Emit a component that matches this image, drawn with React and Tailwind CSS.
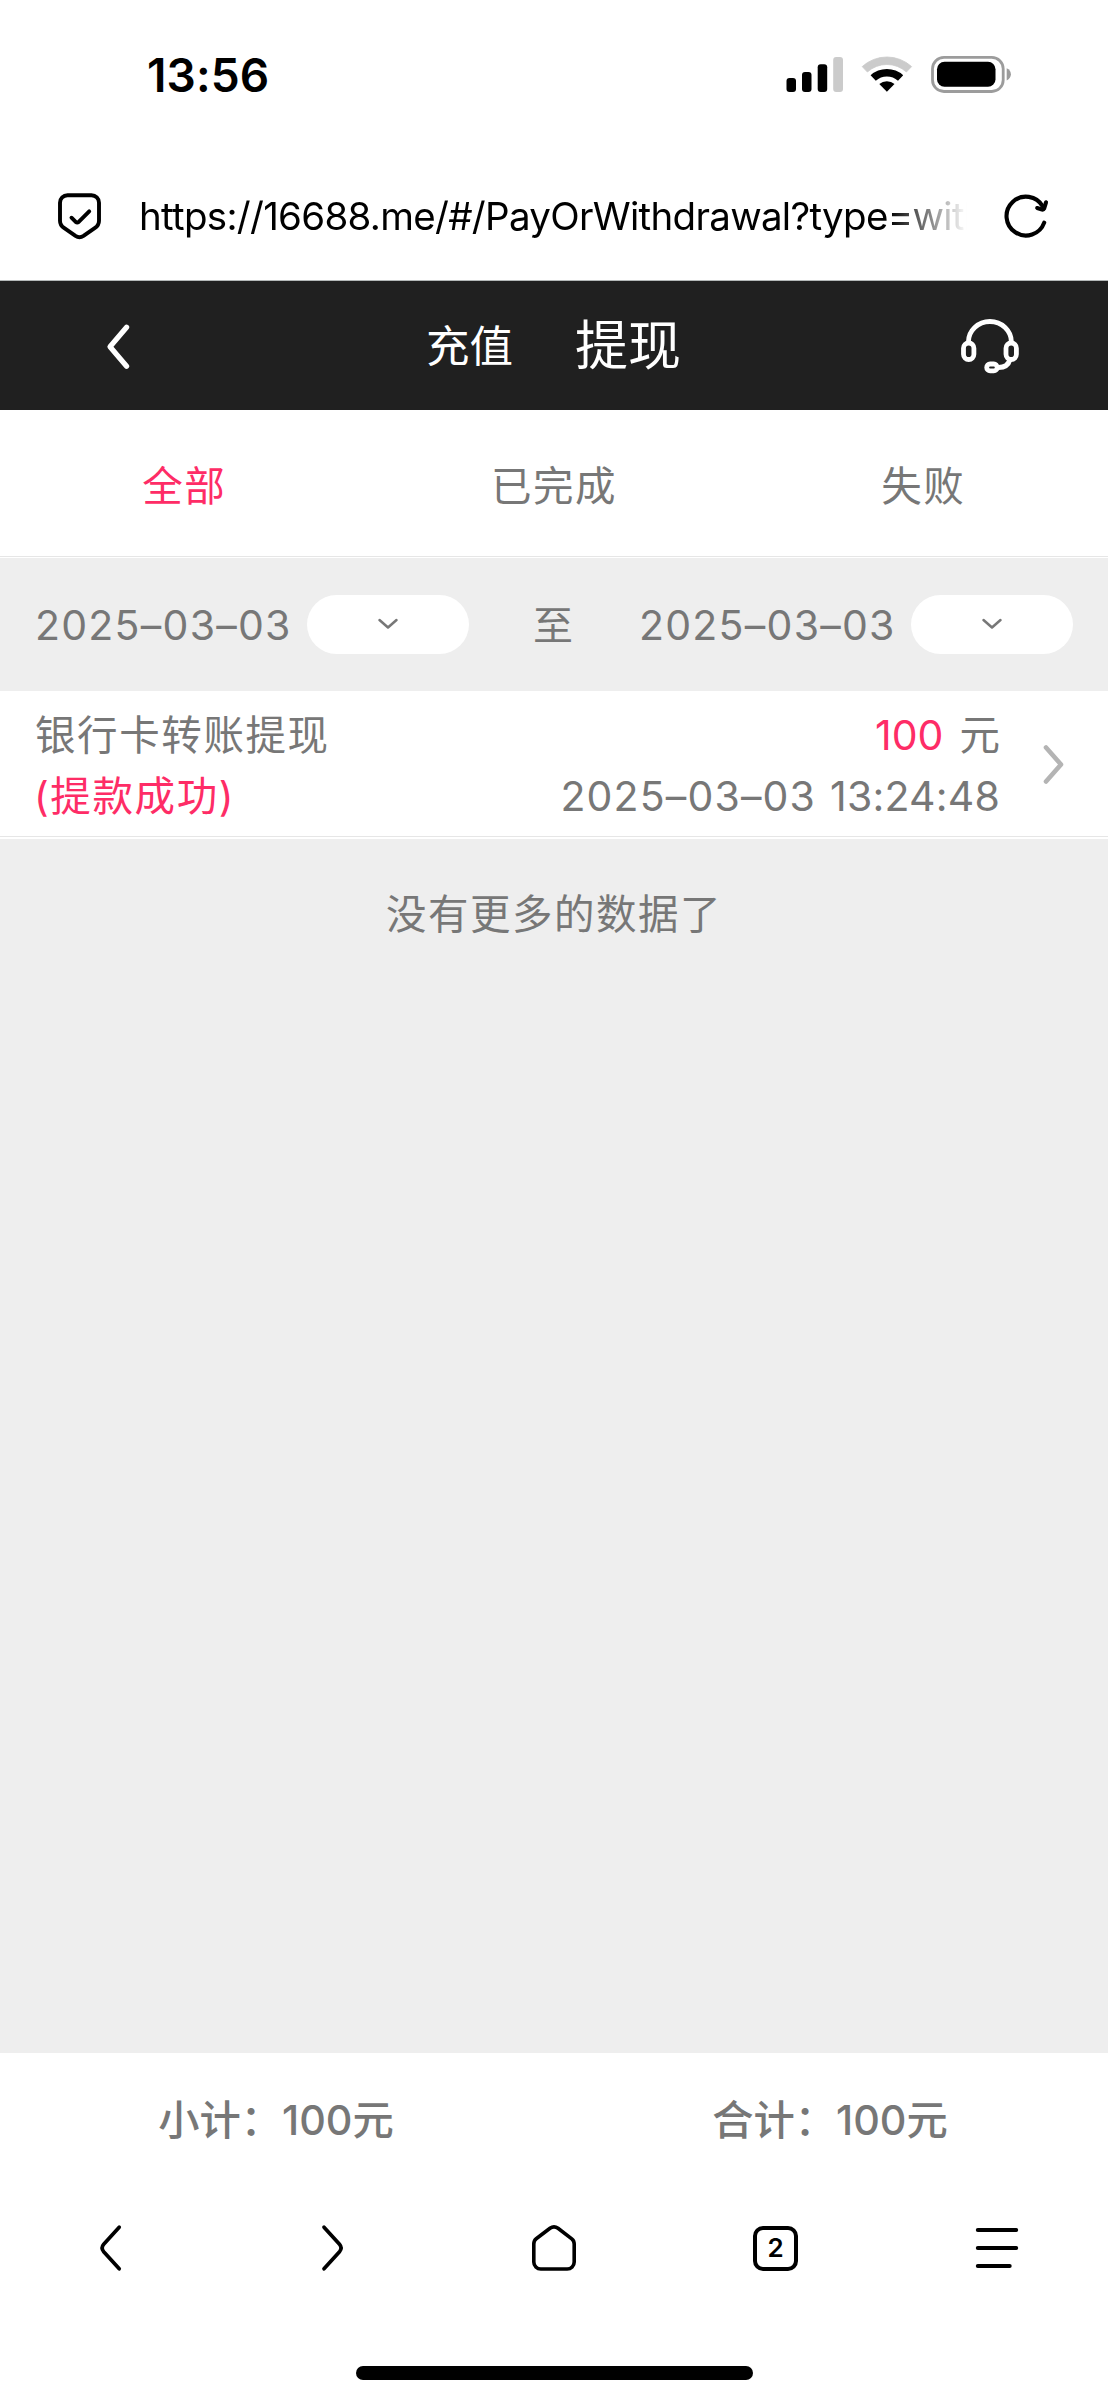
function StatusBar() {
  return (
    <div className="flex h-[152px] items-start justify-between pl-[147px] pr-[97px]">
      <div className="mt-[47px] text-[46px] font-semibold leading-[56px] tracking-[0.1px] text-black">13:56</div>
      <svg className="mt-[54px]" width="226" height="42" viewBox="785 54 226 42">
        <rect x="786.5" y="78" width="9.5" height="14" rx="3" />
        <rect x="802" y="72" width="9.5" height="20" rx="3" />
        <rect x="817.7" y="64.3" width="9.5" height="27.7" rx="3" />
        <rect x="833.2" y="57" width="9.8" height="35" rx="3" fill="#cbcbcb" />
        <path d="M862.2 66.6a36.5 36.5 0 0 1 49.4 0l-5.200 5.400a29 29 0 0 0-39 0z" fill="#cbcbcb" stroke="#cbcbcb" strokeWidth="0.8" strokeLinejoin="round" />
        <path d="M870.6 75.3a24 24 0 0 1 32.6 0l-5.200 5.500a16.6 16.6 0 0 0-22.2 0z" />
        <path d="M879.3 84a11.5 11.5 0 0 1 15.2 0L886.9 91.8z" />
        <rect x="932.5" y="57.3" width="70.7" height="34.2" rx="11.5" fill="none" stroke="#9c9c9c" strokeWidth="2.8" />
        <rect x="937" y="61.7" width="58.5" height="25" rx="7.5" />
        <path d="M1006.7 68.2c5.6 2.2 5.6 10.2 0 12.2z" fill="#9c9c9c" />
      </svg>
    </div>
  );
}

function AddressBar() {
  return (
    <div className="flex h-[128px] items-center pl-[56px] pr-[58px]">
      <svg className="shrink-0" width="48" height="52" viewBox="56 191 48 52" fill="none" stroke="#000" strokeWidth="3.9" strokeLinecap="round" strokeLinejoin="round">
        <path d="M67.500 196.200h24a7.500 7.500 0 0 1 7.500 7.500v18c0 3.500-1.500 5.500-4 7.200l-11.500 8c-2.600 1.700-5.400 1.700-8 0l-11.500-8c-2.500-1.700-4-3.700-4-7.200v-18a7.500 7.500 0 0 1 7.500-7.500z" />
        <path d="M71.500 218.700l4.200 4.200q1.500 1.200 3 0L89.200 212.400" />
      </svg>
      <div className="ml-[35px] w-[832px] shrink-0 whitespace-nowrap text-[38.5px] leading-[48px] tracking-[-0.7px] text-black [mask-image:linear-gradient(to_right,#000_750px,transparent_828px)]">
        https://16688.me/#/PayOrWithdrawal?type=with
      </div>
      <svg className="ml-[28px] shrink-0" width="51" height="52" viewBox="999 191 51 52" fill="none" stroke="#000" strokeWidth="4.100" strokeLinecap="round" strokeLinejoin="round">
        <path d="M1044.200 223.600A19.400 19.400 0 1 1 1042.800 207.500" />
        <path d="M1046 203.300l-1.900 6.400q-.6 1.200-2 .9l-4.900-1.600" />
      </svg>
    </div>
  );
}

function PageHeader() {
  return (
    <div className="flex h-[129px] items-center bg-[#202020] text-white">
      <svg className="ml-[104px]" width="28" height="50" viewBox="104 320 28 50" fill="none" stroke="#fff" strokeWidth="5.2" strokeLinecap="round" strokeLinejoin="round">
        <path d="M126.600 326.300L110 345.800L126.600 365.200" />
      </svg>
      <div className="ml-[294px] w-[149px] text-[43.5px] leading-[60px]">充值</div>
      <div className="w-[384px] text-[53px] leading-[60px]">提现</div>
      <svg width="62" height="58" viewBox="959 316 62 58" fill="none" stroke="#fff" strokeWidth="4.8">
        <path d="M968.400 342.500v-1.500a21.500 20.500 0 0 1 43 0v1.500" />
        <rect x="963.500" y="342" width="10.400" height="16.500" rx="5.200" />
        <rect x="1006" y="342" width="10.400" height="16.500" rx="5.200" />
        <path d="M1010 358.500c-1.500 5.500-5.500 8-11.500 8" />
        <rect x="986.700" y="363" width="10.500" height="6.800" rx="3.400" />
      </svg>
    </div>
  );
}

function Tabs() {
  return (
    <div className="grid h-[147px] grid-cols-3 border-b border-[#e6e6e6] bg-white text-center text-[40.5px] leading-[153px] tracking-[1.5px] text-[#777]">
      <div className="pr-px text-[#fe2c66]">全部</div>
      <div>已完成</div>
      <div>失败</div>
    </div>
  );
}

function DateField() {
  return (
    <div className="flex items-center">
      <span className="w-[272px] pt-px text-[41px] leading-[60px] tracking-[1.25px]">2025–03–03</span>
      <span className="flex h-[59px] w-[162px] items-center justify-center rounded-full bg-white">
        <svg width="24" height="14" viewBox="0 0 24 14" fill="none" stroke="#777" strokeWidth="2.500" strokeLinecap="round" strokeLinejoin="round">
          <path d="M3.500 2L12 9.500L20.500 2" />
        </svg>
      </span>
    </div>
  );
}

function DateRange() {
  return (
    <div className="mt-px flex h-[133px] items-center justify-between bg-[#eee] pl-[35px] pr-[35px] text-[#777]">
      <DateField />
      <span className="pr-[2px] pt-[2px] text-[40px] leading-[60px]">至</span>
      <DateField />
    </div>
  );
}

function RecordRow() {
  return (
    <div className="flex h-[146px] items-center border-b border-[#e6e6e6] bg-white pl-[35px] pr-[42px] text-[40.5px] leading-[61px] text-[#777]">
      <div className="flex-1 pt-[5px] tracking-[1.600px]">
        <div>银行卡转账提现</div>
        <div className="-ml-px text-[#fe2c66]">(提款成功)</div>
      </div>
      <div className="pt-[5px] text-right text-[41px]">
        <div className="flex items-center justify-end">
          <span className="text-[#fe2c66]">100</span>
          <span className="ml-[16px] text-[40.5px]">元</span>
        </div>
        <div className="flex justify-end gap-[14px]">
          <span className="tracking-[1.15px]">2025–03–03</span>
          <span className="tracking-[0.2px]">13:24:48</span>
        </div>
      </div>
      <svg className="ml-[41px]" width="25" height="44" viewBox="0 0 25 44" fill="none" stroke="#b4b4b4" strokeWidth="4.600" strokeLinecap="round" strokeLinejoin="round">
        <path d="M5 5.500L20 22.500L5 39.500" />
      </svg>
    </div>
  );
}

function Summary() {
  return (
    <div className="grid h-[130px] grid-cols-2 text-center text-[41.300px] font-medium leading-[134px] text-[#777]">
      <div className="pr-[2px]">小计：100元</div>
      <div className="pr-[2px]">合计：100元</div>
    </div>
  );
}

function BottomNav() {
  return (
    <div className="grid h-[130px] grid-cols-5 place-items-center">
      <svg width="52" height="52" viewBox="0 0 52 52" fill="none" stroke="#000" strokeWidth="3.700" strokeLinecap="round">
        <path d="M34.200 5.200L18.700 22.300q-3.200 3.700 0 7.400L34.200 46.800" />
      </svg>
      <svg width="52" height="52" viewBox="0 0 52 52" fill="none" stroke="#000" strokeWidth="3.700" strokeLinecap="round">
        <path d="M18 5.200L33.500 22.300q3.200 3.700 0 7.400L18 46.800" />
      </svg>
      <svg width="52" height="52" viewBox="0 0 52 52" fill="none" stroke="#000" strokeWidth="3.600" strokeLinejoin="round">
        <path d="M22 6.200L8.200 16.800Q5.800 18.700 5.800 22V40a7 7 0 0 0 7 7h26.400a7 7 0 0 0 7-7V22q0-3.300-2.400-5.200L30 6.200q-4-2.800-8 0z" />
      </svg>
      <div className="flex h-[45px] w-[45px] items-center justify-center rounded-[10px] border-[4px] border-black text-[26px] font-semibold leading-none text-black">2</div>
      <svg width="52" height="52" viewBox="0 0 52 52" fill="none" stroke="#000" strokeWidth="4" strokeLinecap="round">
        <path d="M6.800 8H45.200M6.800 26H45.200M6.800 44H38.700" />
      </svg>
    </div>
  );
}

export default function App() {
  return (
    <div className={'flex h-[2400px] w-[1108px] flex-col overflow-hidden bg-white font-["Inter","Noto_Sans_CJK_SC",sans-serif]'} lang="zh-CN">
      <StatusBar />
      <AddressBar />
      <div className="h-px bg-[#b4b8b8]" />
      <PageHeader />
      <Tabs />
      <DateRange />
      <RecordRow />
      <div className="mt-[2px] flex-1 bg-[#eee] pt-[46px] text-center text-[40.5px] leading-[60px] tracking-[1.500px] text-[#777]">没有更多的数据了</div>
      <Summary />
      <BottomNav />
      <div className="flex h-[87px] justify-center">
        <div className="mt-[53px] h-[13.500px] w-[397px] rounded-full bg-black" />
      </div>
    </div>
  );
}
